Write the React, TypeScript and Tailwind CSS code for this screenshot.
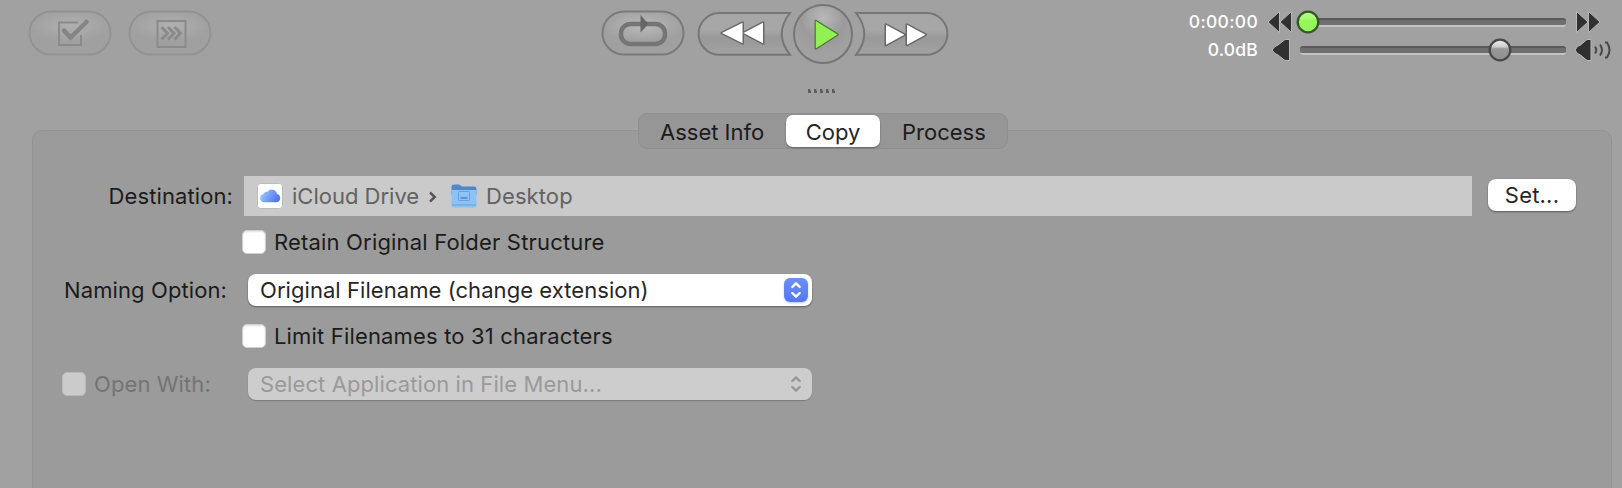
import React from "react";

const ink = "text-[#1b1b1b]";

function PillButton({ dim, children }: { dim?: boolean; children: React.ReactNode }) {
  return (
    <svg width="84" height="46" viewBox="0 0 84 46" className="block shrink-0">
      <defs>
        <radialGradient id="pillShine" cx="50%" cy="30%" r="50%" gradientTransform="translate(0 .1) scale(1 .75)">
          <stop offset="0" stopColor="#bababa" />
          <stop offset="1" stopColor="#a0a0a0" />
        </radialGradient>
        <radialGradient id="pillShineDim" cx="50%" cy="30%" r="50%" gradientTransform="translate(0 .1) scale(1 .75)">
          <stop offset="0" stopColor="#b0b0b0" />
          <stop offset="1" stopColor="#a0a0a0" />
        </radialGradient>
      </defs>
      <rect x="1.5" y="1.5" width="81" height="43" rx="21.5" fill={dim ? "url(#pillShineDim)" : "url(#pillShine)"} stroke={dim ? "#929292" : "#7a7a7a"} strokeWidth="2" />
      {children}
    </svg>
  );
}

function Transport() {
  return (
    <svg width="254" height="64" viewBox="0 0 254 64" className="block shrink-0">
      <defs>
        <linearGradient id="wing" x1="0" y1="0" x2="0" y2="1">
          <stop offset="0" stopColor="#a6a6a6" />
          <stop offset=".4" stopColor="#a7a7a7" />
          <stop offset=".6" stopColor="#999" />
          <stop offset="1" stopColor="#a2a2a2" />
        </linearGradient>
        <radialGradient id="disc" cx="50%" cy="22%" r="62%">
          <stop offset="0" stopColor="#b8b8b8" />
          <stop offset=".6" stopColor="#9b9b9b" />
          <stop offset="1" stopColor="#a1a1a1" />
        </radialGradient>
      </defs>
      <g stroke="#767676" strokeWidth="2" strokeLinejoin="miter">
        <path d="M94 13H23.500a20.900 20.900 0 0 0 0 41.800H94Q77.500 33.800 94 13Z" fill="url(#wing)" />
        <path d="M160 13H230.500a20.900 20.900 0 0 1 0 41.800H160Q176.500 33.800 160 13Z" fill="url(#wing)" />
        <circle cx="127" cy="34" r="29" fill="url(#disc)" />
      </g>
      <g fill="#fff" stroke="#686868" strokeWidth="3" strokeLinejoin="round" style={{ paintOrder: "stroke" }}>
        <path d="M26 33 46.500 22.800v20.400ZM47.500 33 67 22.800v20.400Z" />
        <path d="M190 24.700 208.500 34.700 190 44.700ZM211 24.700 229.500 34.700 211 44.700Z" />
      </g>
      <path d="M119.800 21 141.500 34.500 119.800 48.500Z" fill="#93f053" stroke="#527038" strokeWidth="2.400" strokeLinejoin="round" style={{ paintOrder: "stroke" }} />
    </svg>
  );
}

function SliderTrack({ value, on }: { value: number; on?: boolean }) {
  return (
    <div className="relative mt-[1px] h-[9px] w-[266px] rounded-[3px] border-t-2 border-b-2 border-t-[#5a5a5a] border-b-[#c4c4c4] bg-[#6f6f6f]">
      <svg width="24" height="24" viewBox="0 0 24 24" className="absolute -top-[10px]" style={{ left: value - 12 }}>
        <defs>
          <linearGradient id={on ? "knobOn" : "knobOff"} x1="0" y1="0" x2="0" y2="1">
            <stop offset="0" stopColor={on ? "#b6ff8c" : "#eee"} />
            <stop offset=".34" stopColor={on ? "#a6fb70" : "#cfcfcf"} />
            <stop offset=".44" stopColor={on ? "#95f659" : "#999"} />
            <stop offset="1" stopColor={on ? "#95f659" : "#909090"} />
          </linearGradient>
        </defs>
        <circle cx="12" cy="12" r="10.300" fill={on ? "url(#knobOn)" : "url(#knobOff)"} stroke={on ? "#35552a" : "#484848"} strokeWidth="2.300" />
      </svg>
    </div>
  );
}

function Checkbox({ disabled }: { disabled?: boolean }) {
  return (
    <span
      className={
        disabled
          ? "block size-6 shrink-0 rounded-[5px] border border-[#b9b9b9] bg-[#cbcbcb]"
          : "block size-6 shrink-0 rounded-[5px] border border-[#d0d0d0] bg-white shadow-[inset_0_1px_2px_rgba(0,0,0,0.12)]"
      }
    />
  );
}

function Chevrons({ color }: { color: string }) {
  return (
    <svg width="24" height="24" viewBox="0 0 24 24" fill="none" stroke={color} strokeWidth="2.400" strokeLinecap="round" strokeLinejoin="round">
      <path d="M8.300 9 12 5.400 15.700 9M8.300 15 12 18.600 15.700 15" />
    </svg>
  );
}

function Popup({ disabled, children }: { disabled?: boolean; children: React.ReactNode }) {
  return (
    <div
      className={
        disabled
          ? "flex h-8 w-[564px] items-center justify-between rounded-[8px] bg-[#cdcdcd] pr-1 pl-3 text-[#9a9a9a] shadow-[0_1px_1px_rgba(0,0,0,0.2)]"
          : "flex h-8 w-[564px] items-center justify-between rounded-[8px] bg-white pr-1 pl-3 text-[#262626] shadow-[0_1px_2px_rgba(0,0,0,0.4)]"
      }
    >
      {children}
      <span className={disabled ? "block size-6" : "block size-6 rounded-[6px] bg-linear-to-b from-[#6c90f8] to-[#5577f3] shadow-[0_1px_2px_rgba(85,119,243,0.4)]"}>
        <Chevrons color={disabled ? "#979797" : "#fff"} />
      </span>
    </div>
  );
}

export default function App() {
  return (
    <div className={`h-[488px] w-[1622px] overflow-hidden bg-[#a1a1a1] font-['Inter','Liberation_Sans',sans-serif] text-[22px] leading-8 ${ink}`}>
      <header className="flex h-[88px] items-start">
        <div className="mt-[10px] ml-[28px] flex gap-4">
          <PillButton dim>
            <path d="M50 12.500H31V35H53V25" fill="none" stroke="#8a8a8a" strokeWidth="2" />
            <path d="M36 20.500 42.500 27.500 58.500 12" fill="none" stroke="#858585" strokeWidth="4.500" strokeLinecap="round" />
          </PillButton>
          <PillButton dim>
            <rect x="29.500" y="11" width="28" height="26" fill="none" stroke="#8a8a8a" strokeWidth="2" />
            <path d="M33.500 17 39.500 23.200 33.500 29.500M40 17 46 23.200 40 29.500M46.500 17 52.500 23.200 46.500 29.500" fill="none" stroke="#8a8a8a" strokeWidth="3" />
          </PillButton>
        </div>
        <div className="mt-[10px] ml-[389px]">
          <PillButton>
            <rect x="20" y="14" width="44" height="20" rx="9.500" fill="none" stroke="#757575" strokeWidth="4.500" />
            <path d="M39.500 5 47.500 14 39.500 22.500Z" fill="#666" />
          </PillButton>
        </div>
        <div className="ml-[11px]">
          <Transport />
        </div>
        <div className="mt-[12px] ml-[228px] w-[80px] text-right text-[17.500px] leading-[20px] font-medium text-white">
          <div className="h-[28px] tracking-[0.3px]">0:00:00</div>
          <div className="tracking-[0.2px]">0.0dB</div>
        </div>
        <div className="mt-[10px] ml-[9px] w-[26px]">
          <svg width="26" height="52" viewBox="0 0 26 52" fill="#303030" stroke="#b8b8b8" strokeWidth="1">
            <path d="M1 12 12.500 1.500v21ZM13 12 24.500 1.500v21Z" />
            <path d="M5 40 8 36.500 11 35 18 29.500H22.500V50.500H18L11 45 8 43.500Z" />
          </svg>
        </div>
        <div className="mt-[17px] ml-[7px] flex flex-col gap-[18px]">
          <SliderTrack value={8} on />
          <SliderTrack value={200} />
        </div>
        <div className="mt-[10px] ml-[9px]">
          <svg width="38" height="52" viewBox="0 0 38 52" fill="#303030" stroke="#b8b8b8" strokeWidth="1">
            <path d="M1.500 1.500 13 12 1.500 22.500ZM13.500 1.500 25 12 13.500 22.500Z" />
            <path d="M0 40 2.500 36.500 5.500 35 12 29.500H16V50.500H12L5.500 45 2.500 43.500Z" />
            <g fill="none" stroke="#484848" strokeWidth="2">
              <path d="M20 36.500Q22.500 40 20 43.500M25 34.500Q29 40 25 45.500M30 32.500H32Q37 40 32 47.500H30" />
            </g>
          </svg>
        </div>
      </header>

      <div className="flex h-[25px] gap-[3px] pt-px pl-[808px]">
        {[0, 1, 2, 3, 4].map((i) => (
          <span key={i} className="h-[4px] w-[3px] border-b-2 border-l-2 border-[#5c5c5c] bg-[#888]" />
        ))}
      </div>

      <nav className="relative z-10 ml-[638px] flex h-9 w-[370px] items-center rounded-[9px] border border-[#8f8f8f] bg-[#969696]">
        <span className="w-[147px] pt-[2px] pl-[21px] whitespace-nowrap">Asset Info</span>
        <span className="h-8 w-[94px] rounded-[7px] bg-white pt-px text-center whitespace-nowrap text-[#262626] shadow-[0_1px_2px_rgba(0,0,0,0.35)]">Copy</span>
        <span className="flex-1 pt-[2px] pl-[22px] whitespace-nowrap">Process</span>
      </nav>

      <main className="-mt-[19px] ml-8 h-[370px] w-[1580px] rounded-t-[10px] border border-[#939393] bg-[#9b9b9b] pt-[45px]">
        <div className="flex h-10 items-center">
          <span className="w-[211px] pr-[11px] text-right tracking-[0.1px] whitespace-nowrap">Destination:</span>
          <div className="flex h-10 w-[1228px] items-center bg-[#cacaca] pl-[13px] text-[#626262]">
            <svg width="26" height="26" viewBox="0 0 26 26">
              <defs>
                <linearGradient id="cloud" x1="0" y1="0" x2="1" y2=".4">
                  <stop offset="0" stopColor="#a3d6fa" />
                  <stop offset="1" stopColor="#5478ee" />
                </linearGradient>
              </defs>
              <rect x=".5" y=".5" width="25" height="25" rx="3" fill="#fff" stroke="#bcbcbc" />
              <path d="M7 19.200a4.200 4.200 0 0 1-.500-8.300A3.700 3.700 0 0 1 10.500 8.800a5.300 5.300 0 0 1 9.500 2.200A4.200 4.200 0 0 1 19.800 19.200Z" fill="url(#cloud)" />
            </svg>
            <span className="ml-[9px] w-[129px] whitespace-nowrap">iCloud Drive</span>
            <svg width="10" height="14" viewBox="0 0 10 14" className="mt-[2px] ml-[7px]" fill="none" stroke="#555" strokeWidth="2.400">
              <path d="M2 2.500 6.800 7 2 11.500" />
            </svg>
            <svg width="28" height="26" viewBox="0 0 28 26" className="ml-[12px]">
              <path d="M1.500 4Q1.500 1.500 4 1.500H9L12 3.500H24Q26.500 3.500 26.500 6V12H1.500Z" fill="#5287c9" />
              <path d="M1.500 7H26.500V22Q26.500 24.500 24.500 24.500H3.500Q1.500 24.500 1.500 22Z" fill="#8cc2f6" />
              <path d="M2 22H26" stroke="#679fd9" strokeWidth="1" />
              <rect x="8.500" y="8.500" width="11" height="9" rx="1" fill="none" stroke="#689fdc" />
              <path d="M10.500 15H17.500" stroke="#5c94d4" strokeWidth="2" />
            </svg>
            <span className="ml-2 tracking-[0.1px] whitespace-nowrap">Desktop</span>
          </div>
          <button className="mb-[2px] ml-4 h-8 w-[88px] rounded-[8px] bg-white leading-[30px] tracking-[0.2px] text-[#262626] shadow-[0_1px_2px_rgba(0,0,0,0.4)]">Set...</button>
        </div>

        <div className="mt-[14px] ml-[209px] flex h-6 items-center gap-2">
          <Checkbox />
          <span className="tracking-[0.18px] whitespace-nowrap">Retain Original Folder Structure</span>
        </div>

        <div className="mt-[20px] flex h-8 items-center">
          <span className="w-[215px] pr-[21px] text-right tracking-[0.1px] whitespace-nowrap">Naming Option:</span>
          <Popup>
            <span className="tracking-[0.06px] whitespace-nowrap">Original Filename (change extension)</span>
          </Popup>
        </div>

        <div className="mt-[18px] ml-[209px] flex h-6 items-center gap-2">
          <Checkbox />
          <span className="tracking-[0.17px] whitespace-nowrap">Limit Filenames to 31 characters</span>
        </div>

        <div className="mt-[20px] flex h-8 items-center">
          <div className="flex w-[215px] items-center gap-2 pl-[29px] text-[#747474]">
            <Checkbox disabled />
            <span className="tracking-[0.1px] whitespace-nowrap">Open With:</span>
          </div>
          <Popup disabled>
            <span className="tracking-[0.09px] whitespace-nowrap">Select Application in File Menu...</span>
          </Popup>
        </div>
      </main>
    </div>
  );
}
